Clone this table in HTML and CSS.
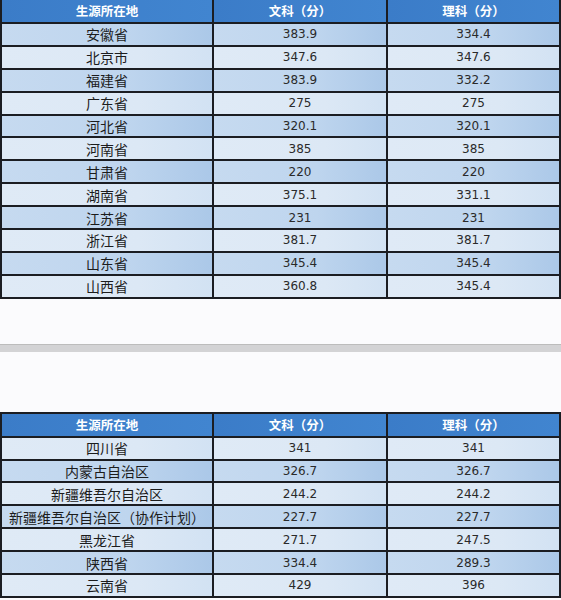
FILE: index.html
```html
<!DOCTYPE html>
<html lang="zh">
<head>
<meta charset="utf-8">
<title>分数线</title>
<link rel="stylesheet" href="styles.css">
</head>
<body>
<div class="page">
  <table class="scores first">
    <colgroup><col class="c1"><col class="c2"><col class="c3"></colgroup>
    <thead>
      <tr><th>生源所在地</th><th>文科（分）</th><th>理科（分）</th></tr>
    </thead>
    <tbody>
      <tr class="dark"><td class="name">安徽省</td><td>383.9</td><td>334.4</td></tr>
      <tr class="light"><td class="name">北京市</td><td>347.6</td><td>347.6</td></tr>
      <tr class="dark"><td class="name">福建省</td><td>383.9</td><td>332.2</td></tr>
      <tr class="light"><td class="name">广东省</td><td>275</td><td>275</td></tr>
      <tr class="dark"><td class="name">河北省</td><td>320.1</td><td>320.1</td></tr>
      <tr class="light"><td class="name">河南省</td><td>385</td><td>385</td></tr>
      <tr class="dark"><td class="name">甘肃省</td><td>220</td><td>220</td></tr>
      <tr class="light"><td class="name">湖南省</td><td>375.1</td><td>331.1</td></tr>
      <tr class="dark"><td class="name">江苏省</td><td>231</td><td>231</td></tr>
      <tr class="light"><td class="name">浙江省</td><td>381.7</td><td>381.7</td></tr>
      <tr class="dark"><td class="name">山东省</td><td>345.4</td><td>345.4</td></tr>
      <tr class="light"><td class="name">山西省</td><td>360.8</td><td>345.4</td></tr>
    </tbody>
  </table>

  <div class="separator"></div>

  <table class="scores second">
    <colgroup><col class="c1"><col class="c2"><col class="c3"></colgroup>
    <thead>
      <tr><th>生源所在地</th><th>文科（分）</th><th>理科（分）</th></tr>
    </thead>
    <tbody>
      <tr class="light"><td class="name">四川省</td><td>341</td><td>341</td></tr>
      <tr class="dark"><td class="name">内蒙古自治区</td><td>326.7</td><td>326.7</td></tr>
      <tr class="light"><td class="name">新疆维吾尔自治区</td><td>244.2</td><td>244.2</td></tr>
      <tr class="dark"><td class="name">新疆维吾尔自治区（协作计划）</td><td>227.7</td><td>227.7</td></tr>
      <tr class="light"><td class="name">黑龙江省</td><td>271.7</td><td>247.5</td></tr>
      <tr class="dark"><td class="name">陕西省</td><td>334.4</td><td>289.3</td></tr>
      <tr class="light"><td class="name">云南省</td><td>429</td><td>396</td></tr>
    </tbody>
  </table>
</div>
</body>
</html>
```

FILE: styles.css
```css
html, body {
  margin: 0;
  padding: 0;
  background: #fbfbfd;
}

.page {
  display: flex;
  flex-direction: column;
  width: 561px;
}

.scores {
  width: 559px;
  border-collapse: collapse;
  table-layout: fixed;
  font-family: "Noto Sans CJK SC", "DejaVu Sans", sans-serif;
  color: #1f1f1f;
}

.c1 { width: 212px; }
.c2 { width: 174px; }
.c3 { width: 173px; }

.scores th,
.scores td {
  border: 2px solid #1b1d22;
  padding: 0;
  text-align: center;
  vertical-align: middle;
  white-space: nowrap;
  overflow: hidden;
}

.scores th {
  background: linear-gradient(to right, #3b7cc8, #4185d0);
  color: #ffffff;
  font-size: 12.5px;
  font-weight: 700;
  line-height: 20px;
}

.scores.first th {
  border-top: 0;
  height: 22px;
}

.scores.second th {
  height: 22px;
}

.scores td {
  height: 20.9px;
  font-family: "DejaVu Sans", sans-serif;
  font-size: 12px;
  line-height: 20px;
  color: #2a2a2a;
}

.scores td.name {
  font-family: "Noto Sans CJK SC", sans-serif;
  font-size: 14px;
  color: #1c1c1c;
}

.scores tr.light td {
  background: linear-gradient(to right, #dfeaf6 0%, #dce8f5 65%, #d2e2f3 100%);
}

.scores tr.dark td {
  background: linear-gradient(to right, #c6daf0 0%, #bed5ee 60%, #abc8e8 100%);
}

.separator {
  margin-top: 45px;
  height: 7px;
  border-top: 1px solid #bcbcbc;
  background: #d3d3d5;
  margin-bottom: 60px;
}
```
